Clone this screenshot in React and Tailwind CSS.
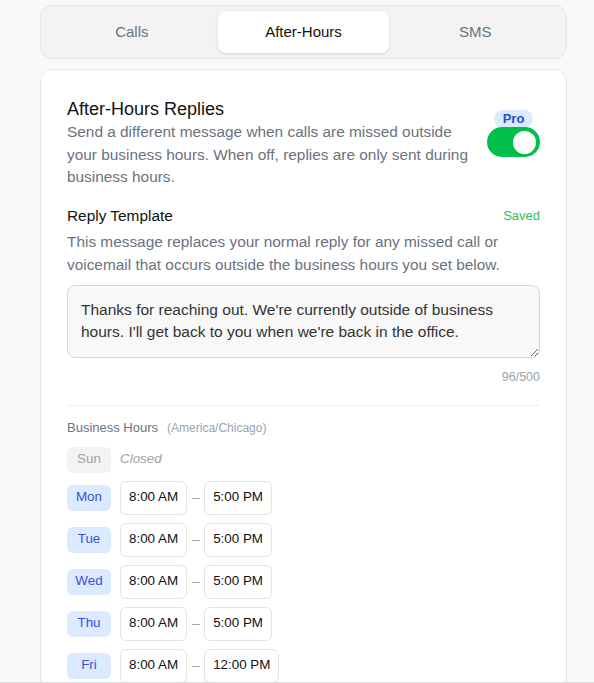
import React from "react";

const days = [
  { d: "Sun", closed: true },
  { d: "Mon", from: "8:00 AM", to: "5:00 PM" },
  { d: "Tue", from: "8:00 AM", to: "5:00 PM" },
  { d: "Wed", from: "8:00 AM", to: "5:00 PM" },
  { d: "Thu", from: "8:00 AM", to: "5:00 PM" },
  { d: "Fri", from: "8:00 AM", to: "12:00 PM" },
  { d: "Sat", closed: true },
];

function TimeBox({ children }) {
  return (
    <div className="h-[34px] px-[8px] flex items-center rounded-[6px] border border-[#e3e3e3] bg-white text-[13.4px] text-[#111]">
      {children}
    </div>
  );
}

export default function App() {
  return (
    <div
      className="min-h-screen bg-[#f9f9f9] pl-[40px] pr-[27px] pt-[5px] pb-10"
      style={{ fontFamily: '"Liberation Sans", Arial, sans-serif' }}
    >
      {/* tabs */}
      <div className="h-[54px] rounded-[12px] border border-[#e6e6e6] bg-[#f3f3f3] p-[5px] grid grid-cols-3">
        <button className="rounded-[8px] text-[15px] text-[#6b7280]">Calls</button>
        <button className="rounded-[8px] text-[15px] text-[#111] bg-white shadow-[0_1px_3px_rgba(0,0,0,0.12)]">
          After-Hours
        </button>
        <button className="rounded-[8px] text-[15px] text-[#6b7280]">SMS</button>
      </div>

      {/* settings card */}
      <div className="mt-[10px] rounded-[12px] border border-[#e6e6e6] bg-white px-[26px] pt-[27px] pb-8">
        <div className="flex items-start justify-between gap-4">
          <div className="max-w-[410px]">
            <h2 className="text-[18px] leading-[24px] text-[#111]">After-Hours Replies</h2>
            <p className="text-[15.4px] leading-[22.5px] text-[#6b7280]">
              Send a different message when calls are missed outside your business hours. When off, replies are only sent during business hours.
            </p>
          </div>
          <div className="flex flex-col items-center mt-[13px]">
            <span className="w-[39px] h-[18px] rounded-full bg-[#dbeafe] text-[13px] leading-[18px] font-bold text-center text-[#1d4ed8]">
              Pro
            </span>
            <div className="mt-[-1px] w-[53px] h-[30px] rounded-full bg-[#00c04b] flex items-center justify-end pr-[4px]">
              <div className="w-[23px] h-[23px] rounded-full bg-white" />
            </div>
          </div>
        </div>

        <div className="mt-[16px]">
          <div className="flex items-center justify-between">
            <span className="text-[15.4px] leading-[22px] text-[#111]">Reply Template</span>
            <span className="text-[13px] text-[#22c55e]">Saved</span>
          </div>
          <p className="mt-[3px] text-[15.4px] leading-[23px] text-[#6b7280]">
            This message replaces your normal reply for any missed call or voicemail that occurs outside the business hours you set below.
          </p>
          <textarea
            className="mt-[9px] block w-full h-[73px] rounded-[8px] border border-[#d6d6d6] bg-[#f8f8f8] px-[13px] pt-[13px] text-[15.5px] leading-[22px] text-[#333] outline-none"
            defaultValue="Thanks for reaching out. We're currently outside of business hours. I'll get back to you when we're back in the office."
          />
          <div className="mt-[11px] text-right text-[12.5px] leading-[16px] text-[#9ca3af]">96/500</div>
        </div>

        <div className="mt-[20px] border-t border-[#eeeeee] pt-[13px]">
          <div className="flex items-baseline">
            <span className="text-[13px] leading-[18px] text-[#6b7280]">Business Hours</span>
            <span className="ml-[9px] text-[12px] text-[#9ca3af]">(America/Chicago)</span>
          </div>
          <div className="mt-[10px] flex flex-col gap-[8px]">
            {days.map((row) => (
              <div key={row.d} className="flex items-center">
                <span
                  className={
                    row.closed
                      ? "w-[44px] h-[26px] rounded-[6px] bg-[#f3f3f3] text-[13.4px] text-[#a3a3a3] flex items-center justify-center"
                      : "w-[44px] h-[26px] rounded-[6px] bg-[#dbeafe] text-[13.4px] text-[#3b4fd8] flex items-center justify-center"
                  }
                >
                  {row.d}
                </span>
                {row.closed ? (
                  <span className="ml-[9px] text-[13.4px] italic text-[#a3a3a3]">Closed</span>
                ) : (
                  <div className="ml-[9px] flex items-center">
                    <TimeBox>{row.from}</TimeBox>
                    <span className="w-[17px] text-center text-[14px] text-[#9ca3af]">–</span>
                    <TimeBox>{row.to}</TimeBox>
                  </div>
                )}
              </div>
            ))}
          </div>
        </div>
      </div>

      {/* bottom bar edge */}
      <div className="fixed left-0 right-0 bottom-0 h-px bg-[#dcdcdc]" />
    </div>
  );
}
